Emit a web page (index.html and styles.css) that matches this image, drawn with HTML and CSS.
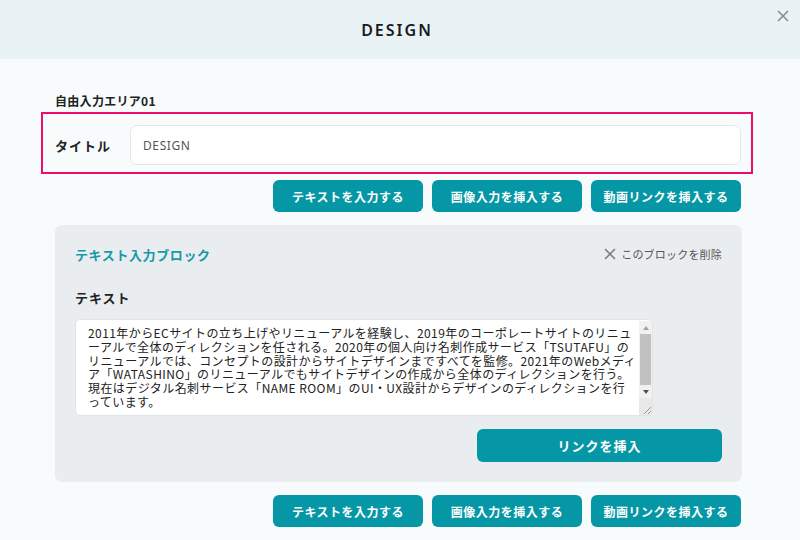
FILE: index.html
```html
<!DOCTYPE html>
<html lang="ja">
<head>
<meta charset="utf-8">
<link rel="stylesheet" href="styles.css">
</head>
<body>
<div class="modal">
  <header class="header">
    <h1 class="header-title">DESIGN</h1>
    <button class="close" aria-label="close">
      <svg width="12" height="12" viewBox="0 0 12 12"><path d="M1 1L11 11M11 1L1 11" stroke="#8b8b8b" stroke-width="1.6" fill="none"/></svg>
    </button>
  </header>
  <main class="content">
    <div class="area-label">自由入力エリア01</div>
    <div class="title-box">
      <span class="title-label">タイトル</span>
      <div class="title-input">DESIGN</div>
    </div>
    <div class="btn-row">
      <button class="btn">テキストを入力する</button>
      <button class="btn">画像入力を挿入する</button>
      <button class="btn">動画リンクを挿入する</button>
    </div>
    <section class="block">
      <div class="block-head">
        <span class="block-title">テキスト入力ブロック</span>
        <span class="block-delete">
          <svg width="12" height="12" viewBox="0 0 12 12"><path d="M1 1L11 11M11 1L1 11" stroke="#7d7d7d" stroke-width="1.6" fill="none"/></svg>
          このブロックを削除
        </span>
      </div>
      <div class="field-label">テキスト</div>
      <div class="textarea">
        <div class="textarea-text">
          <span class="ln">2011年からECサイトの立ち上げやリニューアルを経験し、2019年のコーポレートサイトのリニュ</span>
          <span class="ln">ーアルで全体のディレクションを任される。2020年の個人向け名刺作成サービス「TSUTAFU」の</span>
          <span class="ln">リニューアルでは、コンセプトの設計からサイトデザインまですべてを監修。2021年のWebメディ</span>
          <span class="ln">ア「WATASHINO」のリニューアルでもサイトデザインの作成から全体のディレクションを行う。</span>
          <span class="ln">現在はデジタル名刺サービス「NAME ROOM」のUI・UX設計からデザインのディレクションを行</span>
          <span class="ln">っています。</span>
        </div>
        <div class="scrollbar">
          <span class="sb-arrow sb-up"></span>
          <span class="sb-thumb"></span>
          <span class="sb-arrow sb-down"></span>
          <span class="sb-corner">
            <svg width="13" height="13" viewBox="0 0 13 13"><path d="M12 5L5 12M12 9L9 12" stroke="#9a9a9a" stroke-width="1" fill="none"/></svg>
          </span>
        </div>
      </div>
      <button class="btn btn-link">リンクを挿入</button>
    </section>
    <div class="btn-row btn-row-bottom">
      <button class="btn">テキストを入力する</button>
      <button class="btn">画像入力を挿入する</button>
      <button class="btn">動画リンクを挿入する</button>
    </div>
  </main>
</div>
</body>
</html>
```

FILE: styles.css
```css
* { box-sizing: border-box; }
html, body { margin: 0; padding: 0; }
body {
  width: 800px;
  height: 540px;
  overflow: hidden;
  background: #f7fbfc;
  font-family: "Noto Sans CJK JP", "Noto Sans", sans-serif;
  color: #222;
}
.header {
  position: relative;
  height: 59px;
  background: #e9f2f5;
  display: flex;
  align-items: center;
  justify-content: center;
}
.header-title {
  margin: 0;
  font-family: "Noto Sans", "Noto Sans CJK JP", sans-serif;
  font-size: 16px;
  font-weight: 600;
  letter-spacing: 2px;
  color: #1b1b1b;
  margin-right: 6px;
}
.close {
  position: absolute;
  top: 9px;
  right: 10px;
  width: 14px;
  height: 14px;
  padding: 1px;
  border: 0;
  background: none;
  display: flex;
}
.content {
  padding: 32px 47px 0 41px;
}
.area-label {
  margin-left: 14px;
  font-size: 12px;
  font-weight: 700;
  line-height: 20px;
  height: 20px;
  margin-bottom: 1px;
  letter-spacing: 0.3px;
}
.title-box {
  border: 2px solid #ee0b6c;
  padding: 11px 10px 7px 12px;
  display: flex;
  align-items: center;
}
.title-label {
  width: 75px;
  font-size: 13px;
  font-weight: 700;
  letter-spacing: 1px;
}
.title-input {
  flex: 1;
  height: 40px;
  background: #fff;
  border: 1px solid #e2e8ea;
  border-radius: 7px;
  padding-left: 12px;
  display: flex;
  align-items: center;
  font-family: "Noto Sans", sans-serif;
  font-size: 12px;
  letter-spacing: 0.6px;
  color: #555;
}
.btn-row {
  display: flex;
  justify-content: flex-end;
  gap: 9px;
  margin-top: 6px;
  padding-right: 12px;
}
.btn-row-bottom { margin-top: 13px; }
.btn {
  width: 150px;
  height: 32px;
  border: 0;
  border-radius: 6px;
  background: #0697a6;
  color: #fff;
  font-family: "Noto Sans CJK JP", sans-serif;
  font-size: 12px;
  font-weight: 700;
  letter-spacing: 0.5px;
  padding: 0;
}
.block {
  margin: 13px 11px 0 14px;
  background: #e9edf0;
  border-radius: 7px;
  padding: 19px 20px 20px 20px;
  display: flex;
  flex-direction: column;
}
.block-head {
  display: flex;
  justify-content: space-between;
  align-items: center;
  height: 20px;
}
.block-title {
  color: #1799a8;
  font-size: 13px;
  font-weight: 700;
  letter-spacing: 0.6px;
}
.block-delete {
  display: flex;
  align-items: center;
  gap: 5px;
  font-size: 11px;
  color: #555;
  letter-spacing: 0.2px;
}
.field-label {
  margin-top: 24px;
  height: 20px;
  line-height: 20px;
  font-size: 13px;
  font-weight: 700;
  letter-spacing: 1px;
}
.textarea {
  margin-top: 11px;
  width: 578px;
  height: 97px;
  background: #fff;
  border: 1px solid #dfe4e7;
  border-radius: 5px;
  display: flex;
  overflow: hidden;
}
.textarea-text {
  flex: 1;
  padding: 6px 0 0 12px;
  font-size: 12px;
  line-height: 13.8px;
  letter-spacing: 0.42px;
  color: #222;
}
.ln { display: block; white-space: nowrap; }
.scrollbar {
  width: 13px;
  margin: 1px 0 0 0;
  display: flex;
  flex-direction: column;
  background: #f1f1f1;
}
.sb-arrow {
  height: 13px;
  display: flex;
  align-items: center;
  justify-content: center;
}
.sb-up::before {
  content: "";
  border-left: 3.5px solid transparent;
  border-right: 3.5px solid transparent;
  border-bottom: 4px solid #a3a3a3;
}
.sb-down::before {
  content: "";
  border-left: 3.5px solid transparent;
  border-right: 3.5px solid transparent;
  border-top: 4px solid #505050;
}
.sb-thumb {
  height: 51px;
  margin: 0 1px;
  background: #c1c1c1;
}
.sb-corner {
  flex: 1;
  background: #e8e8e8;
  display: flex;
  align-items: flex-end;
  justify-content: flex-end;
}
.btn-link {
  align-self: flex-end;
  margin-top: 13px;
  width: 245px;
  height: 33px;
  font-size: 13px;
  letter-spacing: 1px;
}
```
